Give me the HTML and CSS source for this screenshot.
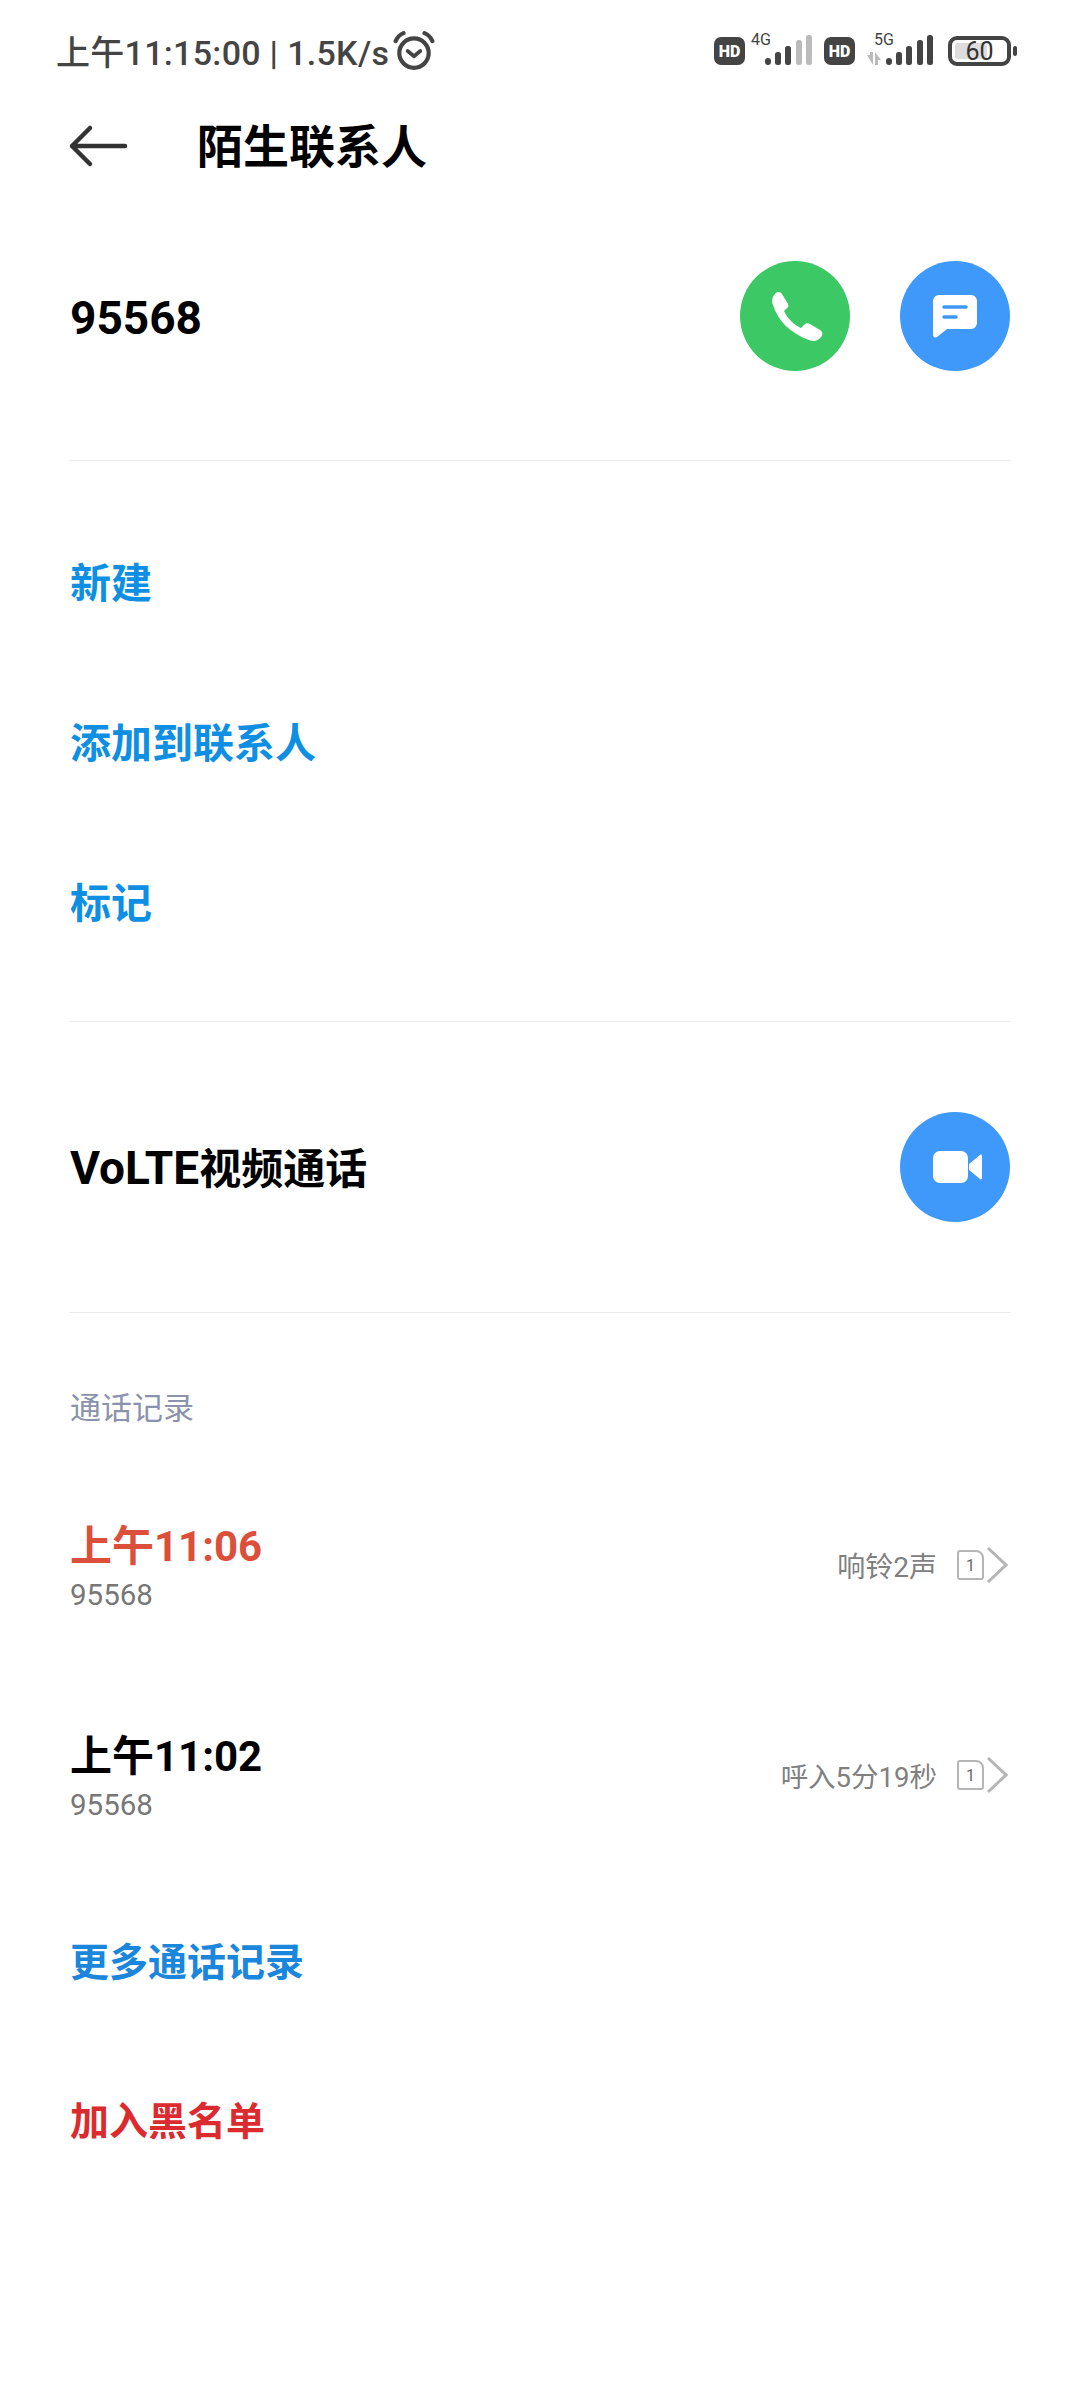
FILE: index.html
```html
<!DOCTYPE html>
<html lang="zh">
<head>
<meta charset="utf-8">
<title>陌生联系人</title>
<link rel="stylesheet" href="styles.css">
</head>
<body>
<div class="page">
  <header class="status">
    <div class="status-left">
      <span class="clock">上午11:15:00 | 1.5K/s</span>
      <svg class="alarm" viewBox="0 0 40 40"><circle cx="20" cy="22" r="14" fill="none" stroke="#444" stroke-width="4"/><path d="M14 20l6 5 6-5" fill="none" stroke="#444" stroke-width="3.6" stroke-linecap="round" stroke-linejoin="round"/><path d="M2.500 10.500Q5 5 10 3M37.500 10.500Q35 5 30 3" fill="none" stroke="#444" stroke-width="4" stroke-linecap="round"/></svg>
    </div>
    <div class="status-right">
      <span class="hd">HD</span>
      <svg class="sig" viewBox="0 0 62 32"><text x="0" y="11" class="sig-label">4G</text><rect x="14" y="24" width="6" height="7" rx="3" fill="#444"/><rect x="24" y="18" width="6" height="13" rx="2.500" fill="#444"/><rect x="34" y="12" width="6" height="19" rx="2.500" fill="#444"/><rect x="45" y="6" width="6" height="25" rx="2.500" fill="#bbb"/><rect x="55" y="1" width="6" height="30" rx="2.500" fill="#bbb"/></svg>
      <span class="hd hd-second">HD</span>
      <svg class="sig sig-5g" viewBox="0 0 68 32"><text x="7" y="11" class="sig-label">5G</text><path d="M0 21h3v-3h3v13zM8 31V18l6 8h-3v5z" fill="#bbb"/><rect x="19" y="24" width="6" height="7" rx="3" fill="#444"/><rect x="29" y="18" width="6" height="13" rx="2.500" fill="#444"/><rect x="39" y="12" width="6" height="19" rx="2.500" fill="#444"/><rect x="50" y="6" width="6" height="25" rx="2.500" fill="#444"/><rect x="60" y="1" width="6" height="30" rx="2.500" fill="#444"/></svg>
      <span class="battery"><span class="battery-fill"></span><span class="battery-num">60</span></span>
      <span class="battery-cap"></span>
    </div>
  </header>

  <nav class="nav">
    <svg class="back" viewBox="0 0 60 44"><path d="M57 22H4M22 4L4 22l18 18" fill="none" stroke="#333" stroke-width="4.500" stroke-linecap="round" stroke-linejoin="round"/></svg>
    <h1 class="title">陌生联系人</h1>
  </nav>

  <section class="contact">
    <div class="number">95568</div>
    <div class="actions">
      <span class="circle circle-green"><svg class="ico" viewBox="0 0 110 110"><path d="M35 33C37 30 41 31 42 33L48 43C49 45 48 47 46 48L44 50C47 57 54 64 61 67L64 64C66 62 68 62 70 63L80 69C83 71 83 74 81 76C78 80 74 81 69 79C50 72 38 60 33 44C31 39 33 35 35 33Z" fill="#fff"/></svg></span>
      <span class="circle circle-blue"><svg class="ico" viewBox="0 0 110 110"><path d="M39 34h32a6 6 0 0 1 6 6v22a6 6 0 0 1-6 6H47L37 76c-2 1-4 0-4-2V40a6 6 0 0 1 6-6z" fill="#fff"/><path d="M44 46h22M44 56h12" stroke="#3f99fb" stroke-width="3.600" stroke-linecap="round"/></svg></span>
    </div>
  </section>

  <section class="links">
    <div class="link">新建</div>
    <div class="link">添加到联系人</div>
    <div class="link">标记</div>
  </section>

  <section class="video">
    <div class="video-label"><span class="latin">VoLTE</span>视频通话</div>
    <span class="circle circle-blue"><svg class="ico" viewBox="0 0 110 110"><rect x="33" y="39" width="35" height="32" rx="7" fill="#fff"/><path d="M69 52l11-9c1-1 2 0 2 1v22c0 1-1 2-2 1l-11-9z" fill="#fff"/></svg></span>
  </section>

  <section class="records">
    <div class="records-head">通话记录</div>
    <div class="record">
      <div class="record-main">
        <div class="record-time record-missed">上午11:06</div>
        <div class="record-num">95568</div>
      </div>
      <div class="record-meta">
        <span class="meta-ring">响铃2声</span>
        <span class="sim">1</span>
        <svg class="chev" viewBox="0 0 22 38"><path d="M2 2l18 17L2 36" fill="none" stroke="#b5b5b5" stroke-width="3"/></svg>
      </div>
    </div>
    <div class="record">
      <div class="record-main">
        <div class="record-time">上午11:02</div>
        <div class="record-num">95568</div>
      </div>
      <div class="record-meta">
        <span>呼入5分19秒</span>
        <span class="sim">1</span>
        <svg class="chev" viewBox="0 0 22 38"><path d="M2 2l18 17L2 36" fill="none" stroke="#b5b5b5" stroke-width="3"/></svg>
      </div>
    </div>
    <div class="link link-more">更多通话记录</div>
    <div class="link link-block">加入黑名单</div>
  </section>
</div>
</body>
</html>
```
FILE: styles.css
```css
* { box-sizing: border-box; }
html, body { margin: 0; padding: 0; background: #fff; }
body { font-family: "Roboto", "Noto Sans CJK SC", sans-serif; color: #000; }
.page { width: 1080px; height: 2400px; overflow: hidden; }

.status { height: 104px; padding: 31px 63px 0 56px; display: flex; justify-content: space-between; align-items: flex-start; }
.status-left { display: flex; align-items: center; gap: 4px; height: 44px; }
.clock { font-size: 34px; font-weight: 500; color: #444; line-height: 44px; letter-spacing: 0.300px; white-space: nowrap; }
.alarm { width: 42px; height: 42px; margin-top: -5px; }
.status-right { display: flex; align-items: center; height: 44px; margin-top: -2px; }
.hd { width: 31px; height: 28px; background: #444; border-radius: 7px; color: #fff; font-size: 16px; font-weight: 900; display: flex; align-items: center; justify-content: center; }
.sig { width: 62px; height: 32px; margin-left: 6px; margin-top: -2px; overflow: visible; flex: none; }
.sig-5g { width: 68px; margin-left: 12px; }
.sig-label { font-size: 16px; fill: #444; font-family: "Roboto", sans-serif; }
.hd-second { margin-left: 11px; }
.battery { width: 63px; height: 30px; margin-left: 13px; border: 4px solid #444; border-radius: 9px; display: flex; align-items: center; justify-content: center; position: relative; }
.battery-fill { position: absolute; left: 3px; top: 3px; bottom: 3px; width: 32px; background: #ddd; border-radius: 2px; }
.battery-num { position: relative; font-size: 25px; color: #333; line-height: 1; }
.battery-cap { width: 4px; height: 10px; background: #444; border-radius: 2px; margin-left: 2px; }

.nav { height: 81px; padding-left: 68px; display: flex; align-items: center; margin-top: 1px; }
.back { width: 60px; height: 44px; }
.title { margin: 3px 0 0 69px; font-size: 46px; font-weight: 700; line-height: 1; }

.contact { height: 275px; margin: 0 69px; padding: 75px 1px 0 1px; display: flex; justify-content: space-between; align-items: flex-start; border-bottom: 1px solid #ececec; }
.number { font-size: 46px; font-weight: 700; line-height: 112px; padding-top: 1px; }
.actions { display: flex; gap: 50px; }
.circle { width: 110px; height: 110px; border-radius: 50%; display: block; flex: none; }
.circle-green { background: #3cc864; }
.circle-blue { background: #3f99fb; }
.ico { width: 110px; height: 110px; display: block; }

.links { margin: 0 69px; height: 561px; padding: 43px 1px 0; border-bottom: 1px solid #ececec; }
.link { font-size: 41px; font-weight: 700; color: #0f8fe3; height: 160px; line-height: 160px; }

.video { margin: 0 69px; height: 291px; padding: 90px 1px 0 1px; display: flex; justify-content: space-between; align-items: flex-start; border-bottom: 1px solid #ececec; }
.video-label { font-size: 42px; font-weight: 700; line-height: 112px; }
.latin { font-size: 46px; }

.records { margin: 0 69px; padding: 0 3px 0 1px; }
.records-head { font-size: 31px; color: #8a93ab; height: 166px; padding-top: 73px; line-height: 46px; }
.record { height: 210px; display: flex; justify-content: space-between; align-items: flex-start; padding-top: 41px; }
.record-main { display: flex; flex-direction: column; }
.record-time { font-size: 42px; font-weight: 700; line-height: 54px; margin-bottom: 3px; }
.record-missed { color: #dc4f3b; }
.record-num { font-size: 29.500px; color: #777; line-height: 36px; }
.record-meta { display: flex; align-items: center; font-size: 27.500px; color: #808080; margin-top: 26px; height: 38px; }
.meta-ring { font-size: 28px; }
.sim { width: 27px; height: 30px; border: 2px solid #b5b5b5; border-radius: 3px; border-top-right-radius: 8px; margin-left: 20px; font-size: 16px; color: #666; display: flex; align-items: center; justify-content: center; }
.chev { width: 22px; height: 38px; margin-left: 2px; }
.link-more { color: #1a86dc; font-size: 39px; height: 159px; line-height: 159px; margin-top: -15px; }
.link-block { color: #dc2b2f; font-size: 39px; height: 159px; line-height: 159px; }
```
